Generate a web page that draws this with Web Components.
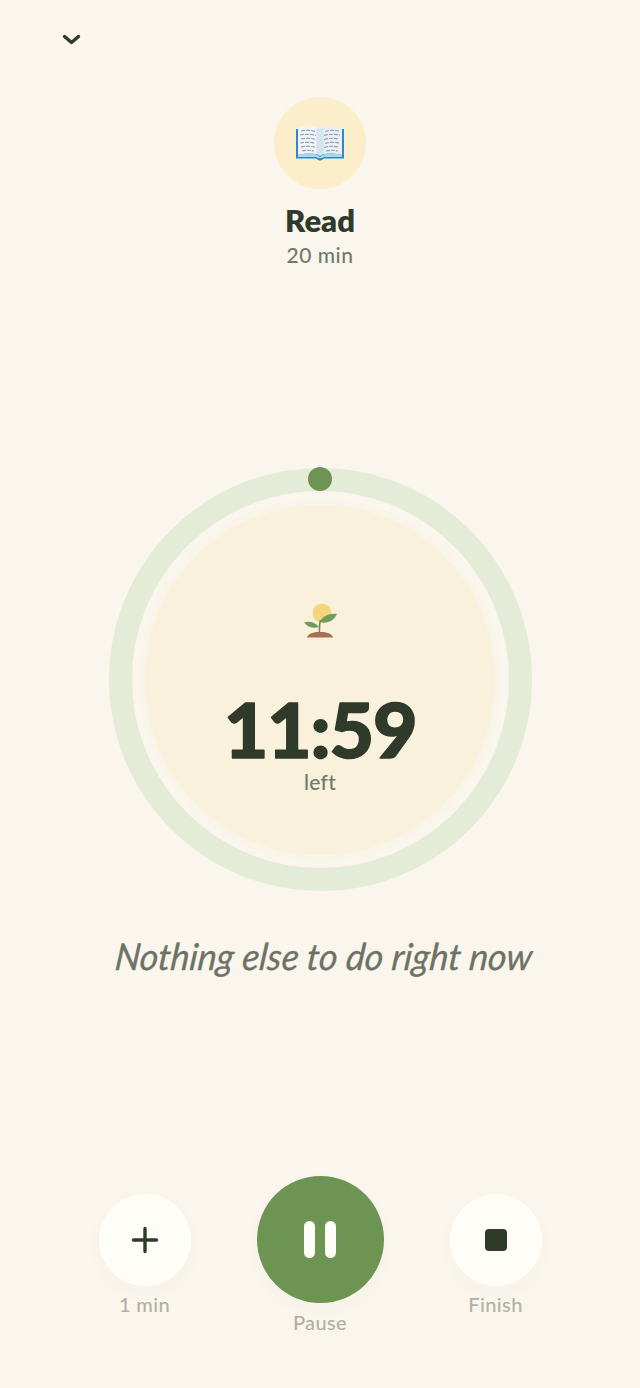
<!DOCTYPE html>
<html lang="en">
<head>
<meta charset="utf-8">
<title>Focus timer</title>
<style>
  html, body { margin: 0; padding: 0; background: #faf6ed; }
  body { font-family: "Lato", "Noto Sans", sans-serif; color: #2f3a2b; }
</style>
</head>
<body>
<focus-screen>
  <task-header slot="header" name="Read" duration="20 min"></task-header>
  <timer-ring slot="timer" time="11:59" caption="left"></timer-ring>
  <span slot="quote">Nothing else to do right now</span>
  <control-button slot="controls" label="1 min" icon="plus"></control-button>
  <control-button slot="controls" label="Pause" icon="pause" primary></control-button>
  <control-button slot="controls" label="Finish" icon="stop"></control-button>
</focus-screen>

<script>
class FocusScreen extends HTMLElement {
  constructor() {
    super()
    this.attachShadow({ mode: "open" })
    this.shadowRoot.innerHTML = `
      <style>
        :host { display: flex; flex-direction: column; width: 640px; height: 1388px; overflow: hidden; }
        .top { height: 97px; padding: 29px 0 0 60px; box-sizing: border-box; }
        .top svg { display: block; width: 23px; height: 20px; }
        .timer { margin-top: 198px; display: flex; justify-content: center; }
        .quote {
          margin-top: 40px;
          height: 50px;
          text-align: center;
          font: italic 400 37px/50px "Lato", sans-serif;
          color: #6d7265;
          transform: translateX(4px) skewX(-6deg) scaleX(.965);
          -webkit-text-stroke: .3px #6d7265;
        }
        .controls { margin-top: 195px; display: flex; justify-content: center; align-items: flex-start; gap: 66px; }
      </style>
      <div class="top">
        <svg viewBox="0 0 23 20"><path d="M4.5 7.5 L11.5 13.5 L18.5 7.5" fill="none" stroke="#2f3a2b" stroke-width="3.4" stroke-linecap="round" stroke-linejoin="round"/></svg>
      </div>
      <slot name="header"></slot>
      <div class="timer"><slot name="timer"></slot></div>
      <div class="quote"><slot name="quote"></slot></div>
      <div class="controls"><slot name="controls"></slot></div>
    `
  }
}
customElements.define("focus-screen", FocusScreen)

class TaskHeader extends HTMLElement {
  constructor() {
    super()
    this.attachShadow({ mode: "open" })
  }

  connectedCallback() {
    this.shadowRoot.innerHTML = `
      <style>
        :host { display: flex; flex-direction: column; align-items: center; }
        .badge { width: 92px; height: 92px; border-radius: 50%; background: #fdeecb; display: flex; align-items: center; justify-content: center; }
        .name { margin-top: 13px; font-size: 31px; line-height: 36px; font-weight: 800; color: #2f3a2b; }
        .duration { margin-top: 2px; font-size: 21px; line-height: 30px; font-weight: 500; color: #73786c; letter-spacing: .5px; }
      </style>
      <div class="badge">
        <svg width="50" height="35" viewBox="0 0 50 35">
          <path d="M1 3 L1 32.5 L20 32.5 C22 32.5 23 34.5 25 34.5 C27 34.5 28 32.5 30 32.5 L49 32.5 L49 3 Z" fill="#2a8ad0"/>
          <path d="M3 2 C10 0 19 0 25 3 L25 29 C19 27 10 27 3 29 Z" fill="#f1f5f8"/>
          <path d="M47 2 C40 0 31 0 25 3 L25 29 C31 27 40 27 47 29 Z" fill="#e9eff4"/>
          <path d="M3 29 C10 27 19 27 23 29.5 L25 31 L27 29.5 C31 27 40 27 47 29 L47 31 L30 31 C28 31 27 32 25 33 C23 32 22 31 20 31 L3 31 Z" fill="#a8d8ee"/>
          <path d="M21.5 2 C23 2.5 24 2.7 25 3 C26 2.7 27 2.5 28.5 2 L28.5 28 L25 30 L21.5 28 Z" fill="#d2e5ef"/>
          <path d="M24 32.5 L25 34.5 L26 32.5 Z" fill="#6b5a4a"/>
          <path d="M6 5 C11 4 15 4 20 5.5 M5 9 C10 8 16 8 21 9.5 M6 13 C11 12 15 12 21 13.5 M5 17 C10 16 16 16 20 17.5 M6 21 C11 20 16 20 21 21.5 M7 25 C11 24 14 24 19 25 M30 5.5 C34 4 39 4 44 5 M29 9.5 C34 8 40 8 45 9 M29 13.5 C35 12 39 12 44 13 M30 17.5 C34 16 40 16 45 17 M29 21.5 C34 20 39 20 44 21 M31 25 C36 24 39 24 43 25" fill="none" stroke="#8fa3b3" stroke-width="1.2" stroke-dasharray="4 1"/>
        </svg>
      </div>
      <div class="name">${this.getAttribute("name")}</div>
      <div class="duration">${this.getAttribute("duration")}</div>
    `
  }
}
customElements.define("task-header", TaskHeader)

class TimerRing extends HTMLElement {
  constructor() {
    super()
    this.attachShadow({ mode: "open" })
  }

  connectedCallback() {
    this.shadowRoot.innerHTML = `
      <style>
        :host { display: block; position: relative; width: 423px; height: 423px; box-sizing: border-box; border: 23px solid #e4ecd8; border-radius: 50%; }
        .gap { width: 100%; height: 100%; box-sizing: border-box; padding: 13.5px; display: flex; }
        .face {
          flex: 1; border-radius: 50%; background: #faf1dc;
          display: flex; flex-direction: column; align-items: center;
          box-shadow: 0 0 8px rgba(250, 241, 220, .8);
        }
        .dot { position: absolute; top: -24px; left: 50%; margin-left: -12px; width: 24px; height: 24px; border-radius: 50%; background: #6d9452; }
        .sprout { margin-top: 98px; display: block; }
        .time { margin-top: 56px; display: block; overflow: visible; }
        .time text {
          font: 900 77px "Lato", sans-serif; letter-spacing: -1.2px;
          fill: #2f3a2b; stroke: #2f3a2b; stroke-width: 1.6px; stroke-linejoin: round;
          text-anchor: middle;
        }
        .caption { margin-top: 3px; font-size: 21px; line-height: 28px; font-weight: 500; color: #73786c; letter-spacing: .3px; }
      </style>
      <div class="gap">
        <div class="face">
          <svg class="sprout" width="36" height="36" viewBox="0 0 36 36">
            <circle cx="20" cy="10" r="9.5" fill="#f4d47c"/>
            <path d="M17.5 30 C17.5 26 17 22 18.5 17" fill="none" stroke="#76895d" stroke-width="1.6"/>
            <path d="M18 19 C20 13 28 10 35 11 C32.5 17 25 21.5 18 19 Z" fill="#6f9c5d"/>
            <path d="M17 24 C13 19 7 17.5 2 19.5 C5.5 24 11 26 17 24 Z" fill="#6f9c5d"/>
            <path d="M5 34.5 C6 30.5 11 29 18 29 C25 29 30 30.5 31 34.5 Z" fill="#a5714e"/>
          </svg>
          <svg class="time" width="200" height="70" viewBox="0 0 200 70"><text x="100" y="63">${this.getAttribute("time")}</text></svg>
          <div class="caption">${this.getAttribute("caption")}</div>
        </div>
      </div>
      <div class="dot"></div>
    `
  }
}
customElements.define("timer-ring", TimerRing)

const CONTROL_ICONS = {
  plus: `<path d="M14 2.5 V25.5 M2.5 14 H25.5" fill="none" stroke="#2f3a2b" stroke-width="3.4" stroke-linecap="round"/>`,
  pause: `<rect x="1" y="0" width="11" height="37" rx="5.5" fill="#fffdf7"/><rect x="22" y="0" width="11" height="37" rx="5.5" fill="#fffdf7"/>`,
  stop: `<rect x="3" y="3" width="22" height="22" rx="4" fill="#2f3a2b"/>`
}

class ControlButton extends HTMLElement {
  constructor() {
    super()
    this.attachShadow({ mode: "open" })
  }

  connectedCallback() {
    const primary = this.hasAttribute("primary")
    const icon = this.getAttribute("icon")
    const box = icon === "pause" ? "0 0 34 37" : "0 0 28 28"
    this.shadowRoot.innerHTML = `
      <style>
        :host { display: flex; flex-direction: column; align-items: center; width: ${primary ? 127 : 92}px; padding-top: ${primary ? 0 : 18}px; }
        .btn {
          width: ${primary ? 127 : 92}px; height: ${primary ? 127 : 92}px; border-radius: 50%;
          background: ${primary ? "#6d9452" : "#fffdf7"};
          display: flex; align-items: center; justify-content: center;
          box-shadow: 0 6px 20px rgba(90, 80, 50, .025);
        }
        svg { display: block; width: ${primary ? 34 : 28}px; height: ${primary ? 37 : 28}px; }
        .label { margin-top: ${primary ? 4 : 3}px; font-size: 20px; line-height: 30px; font-weight: 500; color: #b0b1a5; letter-spacing: .4px; white-space: nowrap; }
      </style>
      <div class="btn"><svg viewBox="${box}">${CONTROL_ICONS[icon]}</svg></div>
      <div class="label">${this.getAttribute("label")}</div>
    `
  }
}
customElements.define("control-button", ControlButton)
</script>
</body>
</html>
